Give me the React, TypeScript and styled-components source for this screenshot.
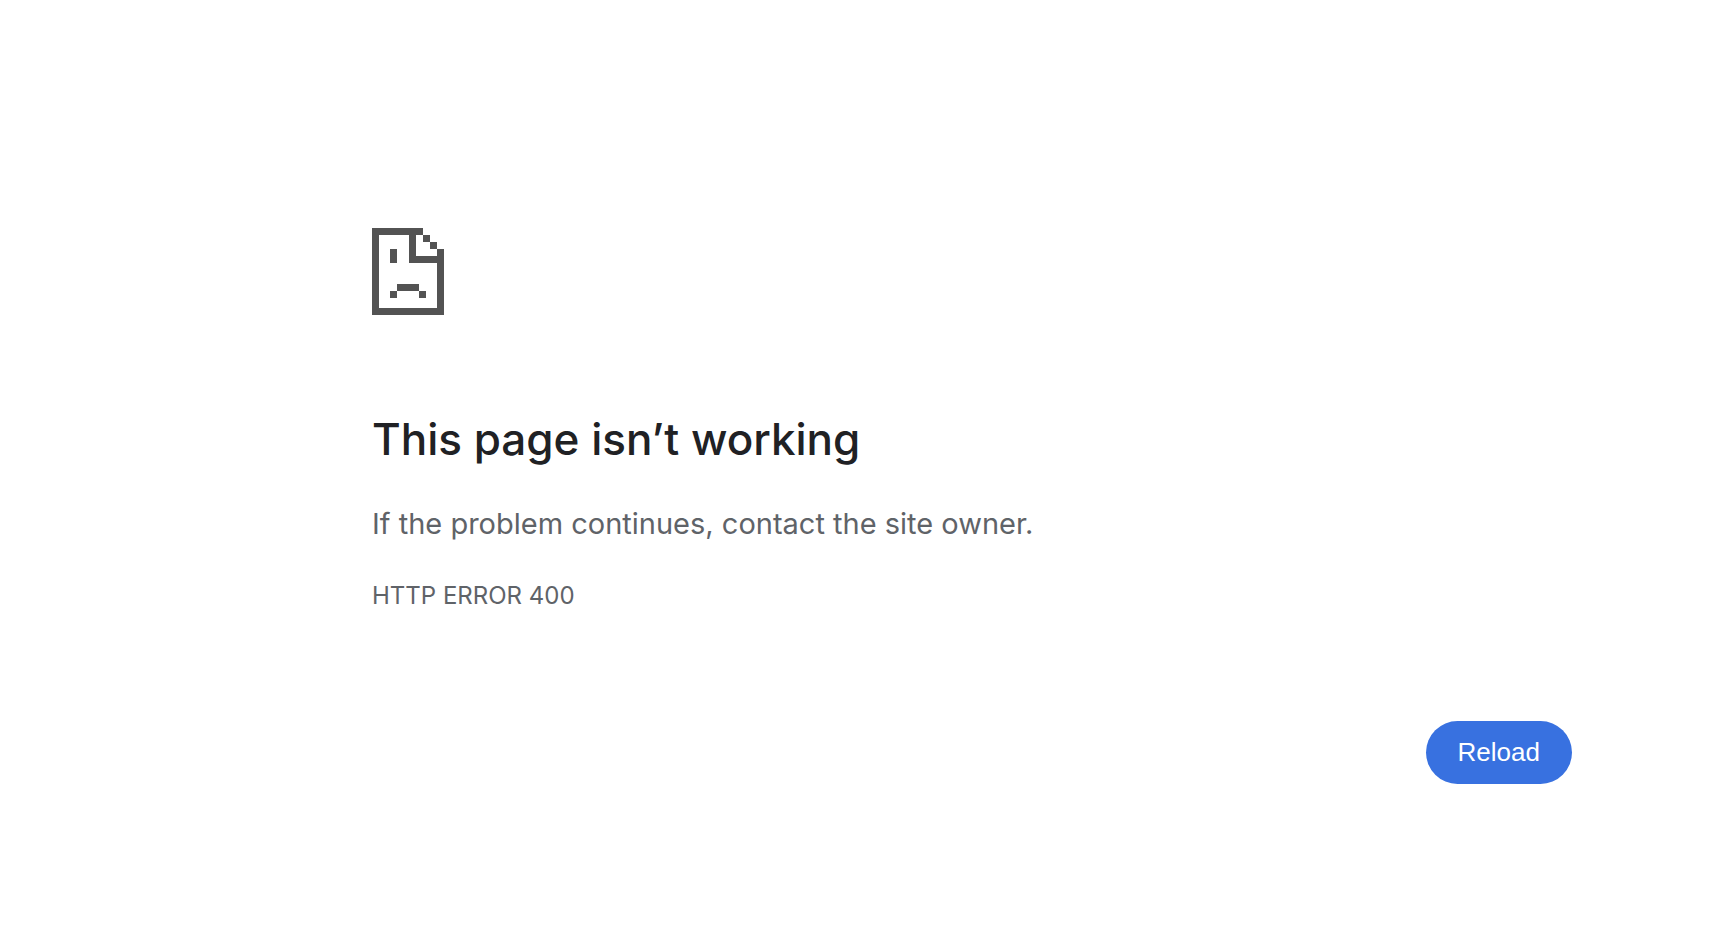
import React from "react";
import styled, { createGlobalStyle } from "styled-components";

const GlobalStyle = createGlobalStyle`
  body {
    margin: 0;
    background: #fff;
    color: #5f6368;
    font-family: Inter, "Liberation Sans", sans-serif;
  }
`;

const Wrapper = styled.main`
  padding: 228px 142px 48px 372px;
`;

const PageIcon = styled.svg`
  display: block;
  width: 72px;
  height: 87px;
  margin-bottom: 92px;
  fill: #535353;
`;

const Title = styled.h1`
  margin: 0 0 29px;
  color: #202124;
  font-size: 44px;
  font-weight: 500;
  line-height: 64px;
`;

const Message = styled.p`
  margin: 0 0 24px;
  font-size: 29px;
  line-height: 48px;
`;

const ErrorCode = styled.p`
  margin: 0 0 101px;
  font-size: 24px;
  line-height: 48px;
`;

const Actions = styled.div`
  display: flex;
  justify-content: flex-end;
`;

const ReloadButton = styled.button`
  padding: 16px 32px;
  border: 0;
  border-radius: 32px;
  background: #3871e0;
  color: #fff;
  font: 26px/31px "Liberation Sans", Arial, sans-serif;
  cursor: pointer;
`;

export default function App() {
  return (
    <>
      <GlobalStyle />
      <Wrapper>
        <PageIcon viewBox="0 0 72 87" shapeRendering="crispEdges" aria-hidden="true">
          {/* sheet outline with its folded corner */}
          <path d="M0 0H51V7H44V28H65V21H72V87H0ZM7 7V80H65V35H37V7Z" fillRule="evenodd" />
          <path d="M51 7h7v7h-7zM58 14h7v7h-7z" />
          {/* eye and mouth */}
          <path d="M18 21h7v14h-7zM25 56h22v7H25zM18 63h7v7h-7zM47 63h7v7h-7z" />
        </PageIcon>
        <Title>This page isn’t working</Title>
        <Message>If the problem continues, contact the site owner.</Message>
        <ErrorCode>HTTP ERROR 400</ErrorCode>
        <Actions>
          <ReloadButton type="button" onClick={() => window.location.reload()}>Reload</ReloadButton>
        </Actions>
      </Wrapper>
    </>
  );
}
